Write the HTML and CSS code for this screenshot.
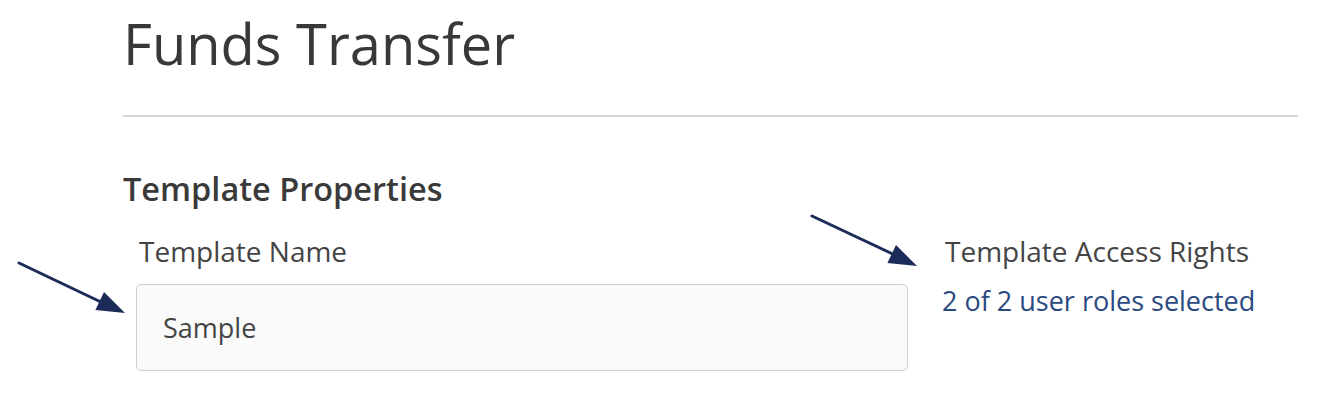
FILE: index.html
```html
<!DOCTYPE html>
<html lang="en">
<head>
<meta charset="utf-8">
<title>Funds Transfer</title>
<link rel="stylesheet" href="styles.css">
</head>
<body>
<div class="page">
  <h1 class="title">Funds Transfer</h1>
  <hr class="divider">
  <h2 class="section-title">Template Properties</h2>
  <div class="form-row">
    <div class="field field-name">
      <label class="field-label" for="tname">Template Name</label>
      <div class="text-input" id="tname">Sample</div>
    </div>
    <div class="field field-access">
      <div class="field-label">Template Access Rights</div>
      <a class="access-link" href="#">2 of 2 user roles selected</a>
    </div>
  </div>
  <svg class="annotations" width="1326" height="402" viewBox="0 0 1326 402" aria-hidden="true">
    <g stroke="#1c2b58" stroke-width="3" stroke-linecap="round" fill="#1c2b58">
      <line x1="19" y1="263" x2="103" y2="303"/>
      <polygon stroke="none" points="125,313 95.4,310 104,292"/>
      <line x1="812" y1="216" x2="895" y2="255"/>
      <polygon stroke="none" points="917,266 887.4,263 896,245"/>
    </g>
  </svg>
</div>
</body>
</html>
```
FILE: styles.css
```css
html, body {
  margin: 0;
  padding: 0;
  background: #ffffff;
}

body {
  font-family: "Open Sans", "Liberation Sans", sans-serif;
  color: #3d3d3d;
}

.page {
  position: relative;
  width: 1326px;
  height: 402px;
  box-sizing: border-box;
  padding: 3px 28px 0 123px;
}

.title {
  margin: 0;
  font-size: 56px;
  line-height: 80px;
  font-weight: 400;
  color: #383838;
}

.divider {
  margin: 32px 0 0 0;
  border: 0;
  border-top: 2px solid #d6d6d6;
  height: 0;
}

.section-title {
  margin: 52px 0 0 0;
  font-size: 32.5px;
  line-height: 40px;
  font-weight: 600;
  color: #3a3a3a;
}

.form-row {
  display: flex;
  margin-top: 24px;
  padding-left: 13px;
  gap: 34px;
}

.field {
  display: flex;
  flex-direction: column;
}

.field-name {
  width: 772px;
}

.field-label {
  display: block;
  padding-left: 3px;
  font-size: 28px;
  line-height: 36px;
  color: #444444;
}

.text-input {
  margin-top: 15px;
  height: 85px;
  box-sizing: content-box;
  border: 1px solid #cfcfcf;
  border-radius: 5px;
  background: #fafafa;
  padding-left: 26px;
  font-size: 27px;
  line-height: 85px;
  color: #444444;
}

.access-link {
  margin-top: 14px;
  font-size: 27px;
  line-height: 36px;
  color: #2a4a80;
  text-decoration: none;
}

.annotations {
  position: absolute;
  left: 0;
  top: 0;
  pointer-events: none;
}
```
